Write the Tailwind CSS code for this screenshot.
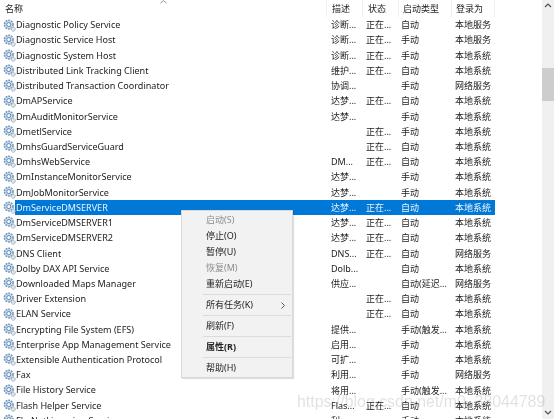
<!DOCTYPE html>
<html lang="zh">
<head>
<meta charset="utf-8">
<script src="https://cdn.jsdelivr.net/npm/@tailwindcss/browser@4"></script>
</head>
<body class="m-0 bg-white">
<svg class="hidden"><defs>
<symbol id="g" viewBox="0 0 14 14">
<circle cx="6.2" cy="6" r="4.7" fill="#cfe0f0" stroke="#6f97bd" stroke-width="1.6" stroke-dasharray="2 1"/>
<circle cx="6.2" cy="6" r="2.2" fill="#f6fafd" stroke="#4f7ba6" stroke-width="1"/>
<circle cx="11" cy="11" r="2.2" fill="#dfe5ea" stroke="#8b9aa8" stroke-width="1" stroke-dasharray="1.2 .6"/>
</symbol>
</defs></svg>
<div class="relative w-[554px] h-[419px] overflow-hidden bg-white text-[9px] text-[#222] font-['Noto_Sans','Noto_Sans_CJK_SC',sans-serif] blur-[0.3px]">
  <div class="flex w-[542px]">
    <div class="w-[495px] shrink-0">
      <div class="relative h-[17.4px] flex items-center">
        <svg class="absolute left-[160px] top-0 w-[7px] h-[4px]" viewBox="0 0 7 4"><path d="M.5 3.2l3-2.6 3 2.6" fill="none" stroke="#777" stroke-width=".8"/></svg>
        <span class="w-[326px] pl-[5px]">名称</span>
        <span class="w-[36px] pl-[5px] border-l border-[#eeeeee] h-full flex items-center">描述</span>
        <span class="w-[36px] pl-[5px] border-l border-[#eeeeee] h-full flex items-center">状态</span>
        <span class="w-[53px] pl-[4px] border-l border-[#eeeeee] h-full flex items-center">启动类型</span>
        <span class="w-[44px] pl-[4px] border-x border-[#eeeeee] h-full flex items-center">登录为</span>
      </div>
      <div class="[&>div]:h-[15.22px] [&>div]:flex [&>div]:items-center [&>div]:whitespace-nowrap [&>div>svg]:w-[13px] [&>div>svg]:h-[13px] [&>div>svg]:ml-[3px] [&>div>svg]:shrink-0 [&>div>b]:font-normal [&>div>b]:text-[9.05px] [&>div>b]:w-[315px] [&>div>b]:shrink-0 [&>div>i]:not-italic [&>div>i]:w-[35px] [&>div>i]:shrink-0 [&>div>u]:no-underline [&>div>u]:w-[54px] [&>div>u]:shrink-0 [&>div>s]:no-underline [&>div>s]:shrink-0">
        <div><svg><use href="#g"/></svg><b>Diagnostic Policy Service</b><i>诊断...</i><i>正在...</i><u>自动</u><s>本地服务</s></div>
        <div><svg><use href="#g"/></svg><b>Diagnostic Service Host</b><i>诊断...</i><i>正在...</i><u>手动</u><s>本地服务</s></div>
        <div><svg><use href="#g"/></svg><b>Diagnostic System Host</b><i>诊断...</i><i>正在...</i><u>手动</u><s>本地系统</s></div>
        <div><svg><use href="#g"/></svg><b>Distributed Link Tracking Client</b><i>维护...</i><i>正在...</i><u>自动</u><s>本地系统</s></div>
        <div><svg><use href="#g"/></svg><b>Distributed Transaction Coordinator</b><i>协调...</i><i></i><u>手动</u><s>网络服务</s></div>
        <div><svg><use href="#g"/></svg><b>DmAPService</b><i>达梦...</i><i>正在...</i><u>自动</u><s>本地系统</s></div>
        <div><svg><use href="#g"/></svg><b>DmAuditMonitorService</b><i>达梦...</i><i></i><u>手动</u><s>本地系统</s></div>
        <div><svg><use href="#g"/></svg><b>DmetlService</b><i></i><i>正在...</i><u>手动</u><s>本地系统</s></div>
        <div><svg><use href="#g"/></svg><b>DmhsGuardServiceGuard</b><i></i><i>正在...</i><u>自动</u><s>本地系统</s></div>
        <div><svg><use href="#g"/></svg><b>DmhsWebService</b><i>DM...</i><i>正在...</i><u>自动</u><s>本地系统</s></div>
        <div><svg><use href="#g"/></svg><b>DmInstanceMonitorService</b><i>达梦...</i><i></i><u>手动</u><s>本地系统</s></div>
        <div><svg><use href="#g"/></svg><b>DmJobMonitorService</b><i>达梦...</i><i></i><u>手动</u><s>本地系统</s></div>
        <div class="bg-[linear-gradient(to_right,transparent_15px,#0078d7_15px)] text-[#eef5fb]"><svg><use href="#g"/></svg><b>DmServiceDMSERVER</b><i>达梦...</i><i>正在...</i><u>自动</u><s>本地系统</s></div>
        <div><svg><use href="#g"/></svg><b>DmServiceDMSERVER1</b><i>达梦...</i><i>正在...</i><u>自动</u><s>本地系统</s></div>
        <div><svg><use href="#g"/></svg><b>DmServiceDMSERVER2</b><i>达梦...</i><i>正在...</i><u>自动</u><s>本地系统</s></div>
        <div><svg><use href="#g"/></svg><b>DNS Client</b><i>DNS...</i><i>正在...</i><u>自动</u><s>网络服务</s></div>
        <div><svg><use href="#g"/></svg><b>Dolby DAX API Service</b><i>Dolb...</i><i></i><u>自动</u><s>本地系统</s></div>
        <div><svg><use href="#g"/></svg><b>Downloaded Maps Manager</b><i>供应...</i><i></i><u>自动(延迟...</u><s>网络服务</s></div>
        <div><svg><use href="#g"/></svg><b>Driver Extension</b><i></i><i>正在...</i><u>自动</u><s>本地系统</s></div>
        <div><svg><use href="#g"/></svg><b>ELAN Service</b><i></i><i>正在...</i><u>自动</u><s>本地系统</s></div>
        <div><svg><use href="#g"/></svg><b>Encrypting File System (EFS)</b><i>提供...</i><i></i><u>手动(触发...</u><s>本地系统</s></div>
        <div><svg><use href="#g"/></svg><b>Enterprise App Management Service</b><i>启用...</i><i></i><u>手动</u><s>本地系统</s></div>
        <div><svg><use href="#g"/></svg><b>Extensible Authentication Protocol</b><i>可扩...</i><i></i><u>手动</u><s>本地系统</s></div>
        <div><svg><use href="#g"/></svg><b>Fax</b><i>利用...</i><i></i><u>手动</u><s>网络服务</s></div>
        <div><svg><use href="#g"/></svg><b>File History Service</b><i>将用...</i><i></i><u>手动(触发...</u><s>本地系统</s></div>
        <div><svg><use href="#g"/></svg><b>Flash Helper Service</b><i>Flas...</i><i>正在...</i><u>自动</u><s>本地系统</s></div>
        <div><svg><use href="#g"/></svg><b>Flu NetLicensing Service</b><i>利...</i><i></i><u>手动</u><s>本地系统</s></div>
      </div>
    </div>
  </div>
  <div class="absolute right-0 top-0 bottom-0 w-3 bg-[#f0f0f0] flex flex-col items-center">
    <svg class="mt-[3px] w-2 h-[5px]" viewBox="0 0 8 5"><path d="M1 4l3-3 3 3" fill="none" stroke="#505050" stroke-width="1.2"/></svg>
    <div class="mt-[60px] w-full h-[33px] bg-[#cdcdcd]"></div>
    <svg class="mt-auto mb-[4px] w-2 h-[5px]" viewBox="0 0 8 5"><path d="M1 1l3 3 3-3" fill="none" stroke="#505050" stroke-width="1.2"/></svg>
  </div>
  <div class="absolute left-[181px] top-[210px] w-[112px] h-[168px] bg-[#f2f2f2] border border-[#d8d8d8] shadow-[1px_1px_1px_rgba(0,0,0,0.12)] pt-[1px] [&>div]:pl-[24px] [&>div]:flex [&>div]:items-center [&>hr]:ml-[21px] [&>hr]:mr-[1px] [&>hr]:border-[#dcdcdc]">
    <div class="h-4 text-[#8c8c8c]">启动(S)</div>
    <div class="h-4">停止(O)</div>
    <div class="h-4">暂停(U)</div>
    <div class="h-4 text-[#8c8c8c]">恢复(M)</div>
    <div class="h-4">重新启动(E)</div>
    <hr class="my-[2px]">
    <div class="h-4 relative">所有任务(K)<svg class="absolute right-[7px] top-[5px] w-1 h-[7px]" viewBox="0 0 4 7"><path d="M.5.5l3 3-3 3" fill="none" stroke="#444" stroke-width=".9"/></svg></div>
    <hr class="my-[2px]">
    <div class="h-4">刷新(F)</div>
    <hr class="my-[2px]">
    <div class="h-4 font-bold">属性(R)</div>
    <hr class="my-[2px]">
    <div class="h-4">帮助(H)</div>
  </div>
  <div class="absolute left-[297px] top-[390px] text-[15.9px] text-[#000]/12 whitespace-nowrap font-['Liberation_Sans',sans-serif]">https://blog.csdn.net/m0_38044789</div>
</div>
</body>
</html>
